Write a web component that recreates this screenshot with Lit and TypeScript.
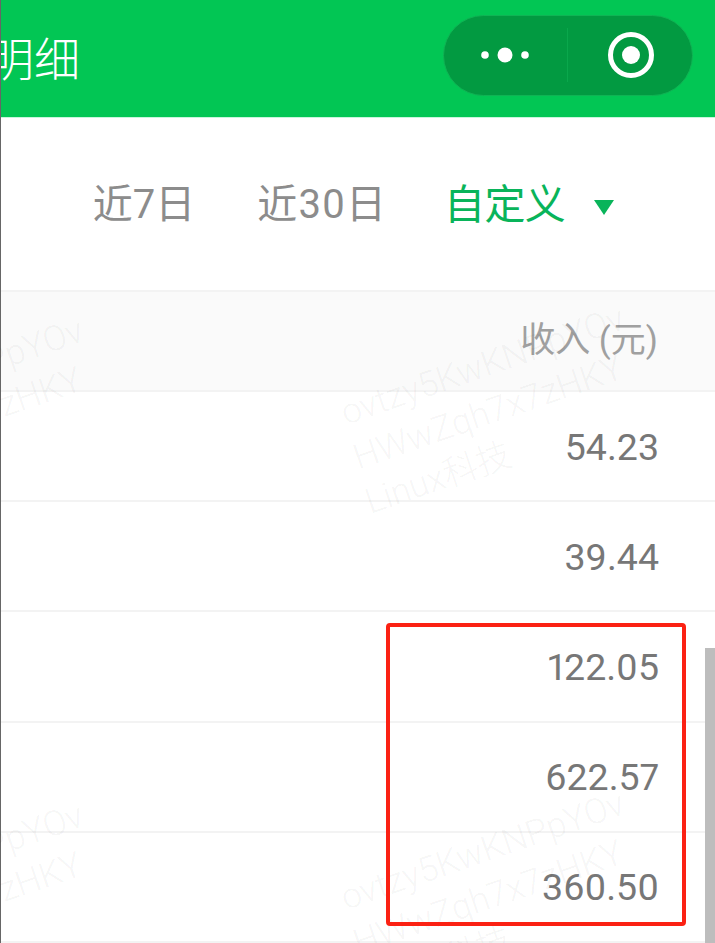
import { LitElement, html, css, svg } from "lit";
import { customElement } from "lit/decorators.js";

const rows = ["54.23", "39.44", "122.05", "622.57", "360.50"];

const mark = (x: number, y: number) => svg`
  <g transform="translate(${x} ${y}) rotate(-19)">
    <text x="0" y="0">ovtzy5KwKNPpYOv</text>
    <text x="-3" y="46">HWwZqh7x7zHKY</text>
    <text x="-6" y="92">Linux科技</text>
  </g>`;

@customElement("app-root")
export class AppRoot extends LitElement {
  static styles = css`
    :host {
      display: block;
      position: relative;
      width: 715px;
      height: 943px;
      overflow: hidden;
      background: #fff;
      font-family: Roboto, "Noto Sans CJK SC", sans-serif;
    }
    .page {
      height: 943px;
      box-sizing: border-box;
      border-left: 1px solid #666;
      display: flex;
      flex-direction: column;
    }
    .header {
      height: 118px;
      flex: none;
      background: #02c654;
      border-bottom: 1px solid #c8f5dc;
      box-sizing: border-box;
      display: flex;
      align-items: center;
      justify-content: space-between;
      padding-right: 22px;
      overflow: hidden;
    }
    .title {
      color: #fff;
      font-size: 46px;
      line-height: 50px;
      margin-left: -13px;
      margin-top: -5px;
      font-family: "Noto Sans CJK SC", sans-serif;
      font-weight: 300;
    }
    .capsule {
      width: 250px;
      height: 81px;
      margin-top: -7px;
      box-sizing: border-box;
      border-radius: 41px;
      background: #029a41;
      border: 1px solid #10b354;
      display: flex;
      align-items: center;
    }
    .cap-l {
      width: 124px;
      height: 54px;
      border-right: 1px solid #0aa84c;
      display: flex;
      align-items: center;
      justify-content: center;
      padding-right: 2px;
      box-sizing: border-box;
    }
    .cap-r {
      flex: 1;
      display: flex;
      align-items: center;
      justify-content: center;
      padding-left: 2px;
    }
    .filters {
      height: 172px;
      flex: none;
      display: flex;
      justify-content: flex-end;
      align-items: flex-start;
      padding: 63px 101px 0 0;
      box-sizing: border-box;
      font-size: 40px;
      line-height: 48px;
      color: #8c8c8c;
    }
    .f1 { margin-right: 62px; }
    .f2 { margin-right: 57px; letter-spacing: 1.2px; }
    .f3 {
      color: #09b45a;
      font-size: 41px;
      letter-spacing: -0.7px;
      margin-right: 29px;
    }
    .tri { margin-top: 19px; margin-right: 0; }
    .thead {
      height: 102px;
      flex: none;
      box-sizing: border-box;
      background: #fafafa;
      border-top: 2px solid #f3f3f3;
      border-bottom: 2px solid #f3f3f3;
      display: flex;
      justify-content: flex-end;
      padding: 28px 57px 0 0;
      font-size: 35px;
      line-height: 42px;
      color: #a0a0a0;
    }
    .row {
      height: 110.2px;
      flex: none;
      box-sizing: border-box;
      border-bottom: 2px solid #f3f3f3;
      display: flex;
      justify-content: flex-end;
      padding: 33.5px 56px 0 0;
      font-size: 37.5px;
      line-height: 42px;
      color: #777;
      font-feature-settings: "pnum" 1;
    }
    .marks {
      position: absolute;
      left: 0;
      top: 0;
      pointer-events: none;
    }
    .marks text {
      font-family: Roboto, "Noto Sans CJK SC", sans-serif;
      font-size: 35px;
      font-weight: 300;
      fill: #000;
      fill-opacity: 0.05;
    }
    .redbox {
      position: absolute;
      left: 386px;
      top: 623px;
      width: 300px;
      height: 303px;
      box-sizing: border-box;
      border: 4px solid #fb2113;
      border-radius: 4px;
    }
    .scroll {
      position: absolute;
      left: 705px;
      top: 648px;
      width: 10px;
      height: 295px;
      background: #bdbdbd;
    }
  `;

  render() {
    return html`
      <div class="page">
        <div class="header">
          <div class="title">明细</div>
          <div class="capsule">
            <div class="cap-l">
              <svg width="50" height="16" viewBox="0 0 50 16">
                <circle cx="5" cy="8" r="3.8" fill="#fff" />
                <circle cx="25" cy="8" r="7.5" fill="#fff" />
                <circle cx="45" cy="8" r="3.8" fill="#fff" />
              </svg>
            </div>
            <div class="cap-r">
              <svg width="48" height="48" viewBox="0 0 48 48">
                <circle cx="24" cy="24" r="20.5" fill="none" stroke="#fff" stroke-width="5" />
                <circle cx="24" cy="24" r="9" fill="#fff" />
              </svg>
            </div>
          </div>
        </div>
        <div class="filters">
          <span class="f1">近7日</span>
          <span class="f2">近30日</span>
          <span class="f3">自定义</span>
          <svg class="tri" width="20" height="16" viewBox="0 0 20 16">
            <path d="M0 0H20L10 15Z" fill="#09b45a" />
          </svg>
        </div>
        <div class="thead"><span>收入 (元)</span></div>
        ${rows.map((r) => html`<div class="row"><span>${r}</span></div>`)}
      </div>
      <svg class="marks" width="715" height="943" viewBox="0 0 715 943">
        ${mark(-195, 437)}
        ${mark(346, 425)}
        ${mark(-195, 922)}
        ${mark(346, 910)}
      </svg>
      <div class="scroll"></div>
      <div class="redbox"></div>
    `;
  }
}
